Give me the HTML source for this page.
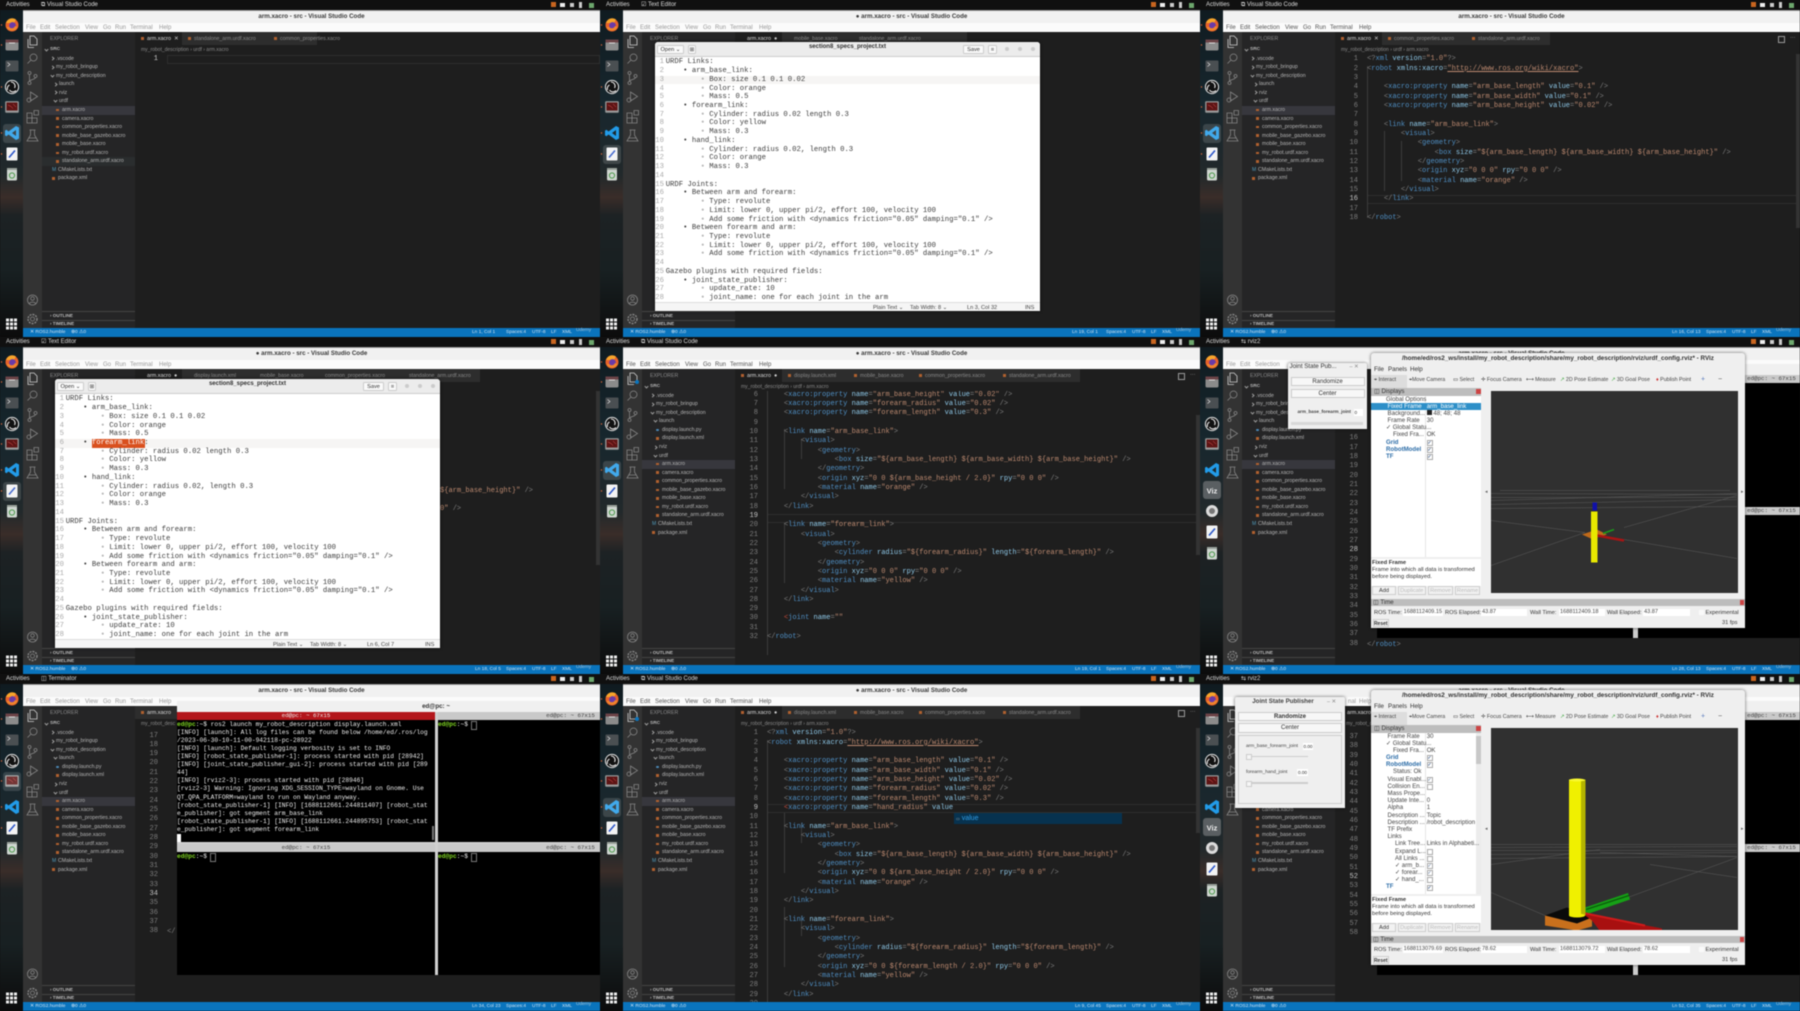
<!DOCTYPE html>
<html><head><meta charset="utf-8"><title>VS Code grid</title>
<style>
html,body{margin:0;padding:0;background:#111;width:1800px;height:1011px;overflow:hidden}
#root{position:absolute;left:0;top:0;width:1800px;height:1011px;filter:blur(.42px)}
.cell{position:absolute;width:600px;height:337px;overflow:hidden;font:5.4px "Liberation Sans",sans-serif;white-space:nowrap;background:#1e1e1e}
.cell div,.cell pre,.cell svg{position:absolute;margin:0}
.x{line-height:0}
.tt{left:0;top:0;width:600px;height:10px;background:#101010;color:#ddd;font-size:6px;z-index:5}
.dk{left:0;top:0;width:23px;height:337px}
.tb{left:23px;top:10px;width:577px;height:13px;background:#f1f1f1;border-top:1px solid #999;box-sizing:border-box}
.mb{left:23px;top:23px;width:577px;height:9px;background:#fbfbfb}
.ab{left:23px;top:32px;width:19px;height:296px;background:#333}
.sd{left:42px;top:32px;width:93px;height:296px;background:#252526}
.tab0{left:135px;top:32px;height:13px;background:#2d2d2d}
.tab1{left:135px;top:32px;width:47px;height:13px;background:#1e1e1e}
.st{left:23px;top:328px;width:577px;height:9px;background:#0a74bd}
.ttl{top:16.5px;left:23px;width:577px;text-align:center;color:#3a3a3a;font-size:6.2px;font-weight:bold}
.m{top:27.5px;font-size:6px;color:#555}
.dim .m{color:#999}
.st .x{top:5px;color:#cfe3f2;font-size:4.8px}
.tx{top:38.5px;color:#8a8a8a;font-size:5.2px}
.tr{left:42px;top:55px;width:93px;color:#b5b5b5;font-size:5.2px}
.tr p{position:relative;margin:0;height:8.57px;line-height:8.57px}
.tr s{position:absolute;top:2.6px;width:2px;height:2px;border-right:.5px solid #999;border-bottom:.5px solid #999;transform:rotate(-45deg)}
.tr s.o{transform:rotate(45deg);top:2px}
.tr q{position:absolute;top:2.8px;width:2.6px;height:2.6px;background:#b0602f;quotes:none}
.tr q:before,.tr q:after{content:""}
.tr .sl{background:#37373d}
.tr .M{background:none;color:#519aba;font-size:5px;top:0;width:auto;height:auto}
.tr .py{background:#4b8ab8;border-radius:50%}
.d0{padding-left:8px}.d0 s{left:3px}
.d1{padding-left:14px}.d1 s{left:9px}
.d2{padding-left:17px}.d2 s{left:12px}
.f2{padding-left:20px}.f2 q{left:14px}
.f1{padding-left:16px}.f1 q{left:10px}
.ed{left:135px;top:54px;width:465px;height:274px;overflow:hidden;background:#1e1e1e}
.ln{left:0;width:23px;text-align:right;font:7.06px/9.33px "Liberation Mono",monospace;color:#7d7d7d;white-space:pre}
.cd{left:32px;font:7.06px/9.33px "Liberation Mono",monospace;color:#7c7c7c;white-space:pre}
.cd i{font-style:normal;color:#4f8fc4}
.cd b{font-weight:normal;color:#8ec8e8}
.cd u{text-decoration:none;color:#bd8a70}
.sb{left:596px;width:4px;background:#333}
.gd{left:32px;width:.6px;background:#3c3c3c}
.g{left:55px;top:42px;width:385px;height:269px;background:#fff;border-radius:3px 3px 0 0;overflow:hidden;box-shadow:0 0 3px rgba(0,0,0,.7)}
.gh{left:0;top:0;width:385px;height:14px;background:#ececec;border-bottom:.5px solid #ccc}
.gb{background:#fafafa;border:.5px solid #ccc;border-radius:1.5px;box-sizing:border-box;text-align:center;color:#333;font-size:5.6px;line-height:8px;height:9px;top:2.5px}
.gt{left:10.7px;top:16.3px;font:7.28px/8.73px "Liberation Mono",monospace;color:#3d3d3d;white-space:pre}
.gn{left:0;top:16.3px;width:9px;text-align:right;font:7.28px/8.73px "Liberation Mono",monospace;color:#aaa;white-space:pre}
.gs{left:0;top:260px;width:385px;height:9px;background:#f5f5f5;border-top:.5px solid #ddd;color:#444;font-size:5.6px}
.gs .x{top:4.5px}
.w{top:5px;width:4px;height:4px;border-radius:50%;background:#d4d4d4}
.R{left:171px;top:15.5px;width:374px;height:275.5px;background:#efefef;color:#333;font-size:6px;border-radius:3px 3px 0 0;box-shadow:0 0 3px rgba(0,0,0,.6)}
.R .y{line-height:0}
.rl{left:0;top:42px;width:110px;height:160px;background:#fff;overflow:hidden;font-size:6.1px}
.rl p{margin:0;height:7.2px;line-height:7.2px;position:relative;color:#444}
.rl em{position:absolute;left:55.7px;font-style:normal}
.rl .k{position:absolute;left:55.5px;top:1.2px;width:4px;height:4px;border:.5px solid #aaa;background:#fff;color:#3a5a8a;font-size:4.5px;line-height:4px;text-align:center}
.rl .bl{color:#2e6ea8;font-weight:bold}
.rb{background:#f2f2f2;border:.5px solid #ccc;box-sizing:border-box;text-align:center;font-size:5.6px;line-height:8px;height:9px;color:#333}
.rb.off{color:#bbb}
.fd{background:#fff;height:7px;line-height:7px;font-size:5.6px;color:#444;padding-left:1px;box-sizing:border-box}
.T{left:177px;top:27px;width:526px;height:274px;background:#000}
.Tb{height:8px;background:#c9c9c9;color:#444;font:5.8px/8px "Liberation Mono",monospace;text-align:center}
.Tp{font:6.24px/8.1px "Liberation Mono",monospace;color:#eee;white-space:pre}
.Tp b{color:#7ed321;font-weight:bold}
.J{background:#efefef;box-shadow:0 0 3px rgba(0,0,0,.6);color:#333;border-radius:2px 2px 0 0}
.Jb{background:#f7f7f7;border:.5px solid #ccc;box-sizing:border-box;text-align:center;font-size:6px;color:#333}
.ic{top:37px;width:2.6px;height:2.6px;background:#b0602f}
</style></head><body>
<svg width="0" height="0" style="position:absolute">
<defs>
<g id="iff"><circle r="6.5" fill="#e8622a"/><path d="M-6 -2A6.5 6.5 0 0 1 4 -5.5L2 -2Z" fill="#f7a52b"/><circle r="3.4" cx=".5" cy=".5" fill="#6a3aa8"/><path d="M-5.5 2A6 6 0 0 0 5.5 2L3 1A3.5 3.5 0 0 1-3 2Z" fill="#f0862c"/></g>
<g id="ifl"><rect x="-6.5" y="-5.5" width="13" height="11" rx="1.5" fill="#8b8b8b"/><path d="M-6.5 -5.5h13v3h-13z" fill="#6b4347"/><rect x="-3" y="-2.5" width="6" height="1" fill="#ddd"/></g>
<g id="itm"><rect x="-6.5" y="-5.5" width="13" height="11" rx="1" fill="#4a4f52"/><path d="M-4.5 -3.5l2.5 2-2.5 2" fill="none" stroke="#ddd" stroke-width=".7"/></g>
<g id="iob"><circle r="6.6" fill="#111" stroke="#e8e8e8" stroke-width="1"/><path d="M-1 -5A4 4 0 0 1 2.5 1M-4.5 3A4 4 0 0 1-2.5-2M4 3.5A4 4 0 0 1-2.5 3" fill="none" stroke="#e8e8e8" stroke-width="1.1"/></g>
<g id="ird"><rect x="-6.8" y="-5.8" width="13.6" height="11.6" rx="1" fill="#999"/><rect x="-5.5" y="-4.5" width="11" height="8" fill="#5d1414"/><path d="M-4 -2l3 1.5 2 2M1 -3l3 3" stroke="#d55" stroke-width=".5" fill="none"/></g>
<g id="ivs"><path fill="#229be8" fill-rule="evenodd" d="M4-7 7-5.5V5.5L4 7-3.5 1.5-5.5 3.3-7 2.4V-2.4L-5.5-3.3-3.5-1.5ZM4-3 0 0 4 3Z"/></g>
<g id="ied"><rect x="-5.5" y="-6.5" width="11" height="13" rx="1" fill="#f3f3f3"/><path d="M-3 3.5 3-3.5" stroke="#2b55c8" stroke-width="1.6"/></g>
<g id="itr"><rect x="-5" y="-6" width="10" height="12.5" rx="1.2" fill="#cfd6d0"/><rect x="-5" y="-6" width="10" height="2" fill="#9aa29c"/><circle cy="1.5" r="2.6" fill="none" stroke="#4f9a4f" stroke-width="1"/></g>
<g id="igr"><rect x="-5.5" y="-5.5" width="3" height="3" fill="#eee"/><rect x="-1.5" y="-5.5" width="3" height="3" fill="#eee"/><rect x="2.5" y="-5.5" width="3" height="3" fill="#eee"/><rect x="-5.5" y="-1.5" width="3" height="3" fill="#eee"/><rect x="-1.5" y="-1.5" width="3" height="3" fill="#eee"/><rect x="2.5" y="-1.5" width="3" height="3" fill="#eee"/><rect x="-5.5" y="2.5" width="3" height="3" fill="#eee"/><rect x="-1.5" y="2.5" width="3" height="3" fill="#eee"/><rect x="2.5" y="2.5" width="3" height="3" fill="#eee"/></g>
<linearGradient id="dg" x1="0" y1="0" x2="0" y2="1"><stop offset="0" stop-color="#0f1a1f"/><stop offset=".3" stop-color="#17272e"/><stop offset=".52" stop-color="#22292b"/><stop offset=".585" stop-color="#3a2d29"/><stop offset=".64" stop-color="#1d2224"/><stop offset=".8" stop-color="#182022"/><stop offset="1" stop-color="#0c0c0c"/></linearGradient>
<symbol id="dock1" viewBox="0 0 23 337"><rect width="23" height="337" fill="url(#dg)"/>
<use href="#iff" x="12" y="25"/><use href="#ifl" x="12" y="45"/><use href="#itm" x="12" y="66"/><use href="#iob" x="12" y="87"/><use href="#ird" x="12" y="107"/><use href="#ivs" x="12" y="133"/><use href="#ied" x="12" y="154"/><use href="#itr" x="12" y="174"/><use href="#igr" x="11.5" y="324"/>
<circle cx="1.5" cy="25" r=".7" fill="#d8653a"/><circle cx="1.5" cy="45" r=".7" fill="#d8653a"/><circle cx="1.5" cy="87" r=".7" fill="#d8653a"/><circle cx="1.5" cy="107" r=".7" fill="#d8653a"/><circle cx="1.5" cy="133" r=".7" fill="#d8653a"/><circle cx="1.5" cy="154" r=".7" fill="#d8653a"/></symbol>
<symbol id="dock2" viewBox="0 0 23 337"><rect width="23" height="337" fill="url(#dg)"/>
<use href="#iff" x="12" y="25"/><use href="#ifl" x="12" y="45"/><use href="#itm" x="12" y="66"/><use href="#iob" x="12" y="87"/><use href="#ird" x="12" y="107"/><use href="#ivs" x="12" y="133"/>
<rect x="3" y="144" width="18" height="18" rx="3" fill="#5a5f62"/><text x="12" y="156.5" font-family="Liberation Sans" font-size="7.5" font-weight="bold" fill="#eee" text-anchor="middle">Viz</text>
<circle cx="12" cy="174" r="6" fill="#dcdcdc"/><circle cx="12" cy="174" r="3" fill="#777"/>
<use href="#ied" x="12" y="195"/><use href="#itr" x="12" y="216"/><use href="#igr" x="11.5" y="324"/></symbol>
<symbol id="act" viewBox="0 0 19 296"><g fill="none" stroke="#858585" stroke-width=".8">
<path d="M7 4h4l3 3v6H7zM5 7v8.5h6" stroke="#d0d0d0"/>
<circle cx="10.5" cy="25.5" r="3.5"/><path d="M8 28l-3.5 3.5"/>
<circle cx="6.5" cy="41" r="1.5"/><circle cx="6.5" cy="51" r="1.5"/><circle cx="12.5" cy="44" r="1.5"/><path d="M6.5 42.5v7M12.5 45.5c0 2-6 2-6 4"/>
<path d="M7.5 60l7 4.5-7 4.500z"/><circle cx="6" cy="68" r="2"/>
<path d="M4 81h5v5h5v5H4zM4 86h5v5M11 78.5h4.5V83H11z"/>
<path d="M7.5 98v5l-3.500 6h11l-3.500-6v-5M6.500 98h6M5.500 106h8"/>
<circle cx="9.5" cy="268" r="5"/><circle cx="9.5" cy="266.5" r="1.8"/><path d="M6 272c1-2.500 6-2.500 7 0"/>
<circle cx="9.5" cy="287" r="2"/><circle cx="9.5" cy="287" r="4.5" stroke-dasharray="2 1" stroke-width="1.4"/></g></symbol>
</defs></svg>
<div id="root">

<!-- CELL 1 -->
<div class="cell dim" style="left:0;top:0">
<div class="tt"><div class="x" style="left:6px;top:5px">Activities</div><div class="x" style="left:41px;top:5px">⧉ Visual Studio Code</div><div style="left:551px;top:2px;width:5px;height:5px;background:#c9651f"></div><div style="left:560px;top:3px;width:5px;height:4px;background:#eee"></div><div style="left:570px;top:3px;width:4px;height:4px;background:#ccc"></div><div style="left:579px;top:2px;width:3px;height:6px;background:#ccc"></div><div style="left:589px;top:3px;width:5px;height:5px;background:#6da86d"></div></div>
<svg class="dk"><use href="#dock1" width="23" height="337"/></svg>
<div style="left:3px;top:124px;width:18px;height:19px;background:rgba(255,255,255,.14);border-radius:3px"></div>
<div class="tb"></div><div class="ttl x">arm.xacro - src - Visual Studio Code</div>
<div class="mb"></div><div class="m x" style="left:26px">File</div><div class="m x" style="left:40px">Edit</div><div class="m x" style="left:55px">Selection</div><div class="m x" style="left:85px">View</div><div class="m x" style="left:103px">Go</div><div class="m x" style="left:115px">Run</div><div class="m x" style="left:130px">Terminal</div><div class="m x" style="left:159px">Help</div>
<div class="ab"></div><svg style="left:23px;top:32px;width:19px;height:296px"><use href="#act" width="19" height="296"/></svg>
<div class="sd"></div><div class="x tx" style="left:50px">EXPLORER</div>
<div class="tr"><p class="d0" style="margin-top:-9px;font-weight:bold;font-size:4.8px"><s class="o"></s>SRC</p>
<p class="d1"><s></s>.vscode</p><p class="d1"><s></s>my_robot_bringup</p><p class="d1"><s class="o"></s>my_robot_description</p><p class="d2"><s></s>launch</p><p class="d2"><s></s>rviz</p><p class="d2"><s class="o"></s>urdf</p>
<p class="f2 sl"><q></q>arm.xacro</p><p class="f2"><q></q>camera.xacro</p><p class="f2"><q></q>common_properties.xacro</p><p class="f2"><q></q>mobile_base_gazebo.xacro</p><p class="f2"><q></q>mobile_base.xacro</p><p class="f2"><q></q>my_robot.urdf.xacro</p><p class="f2" style="background:#2a2d2e"><q></q>standalone_arm.urdf.xacro</p><p class="f1"><q class="M">M</q>CMakeLists.txt</p><p class="f1"><q></q>package.xml</p></div>
<div class="x" style="left:50px;top:316px;color:#bbb;font-weight:bold;font-size:4.6px">› OUTLINE</div><div class="x" style="left:50px;top:324px;color:#bbb;font-weight:bold;font-size:4.6px">› TIMELINE</div><div style="left:42px;top:311px;width:93px;height:.5px;background:#444"></div><div style="left:42px;top:320px;width:93px;height:.5px;background:#444"></div>
<div class="ed"></div>
<div class="tab0" style="width:135px;left:182px"></div><div class="tab1"></div><div style="left:135px;top:45px;width:465px;height:9px;background:#1e1e1e"></div>
<div class="x" style="left:147px;top:38.5px;color:#ddd;font-size:5.4px">arm.xacro</div><div class="x" style="left:174px;top:38.5px;color:#ccc">✕</div><div class="ic" style="left:141px"></div>
<div class="x tx" style="left:194px">standalone_arm.urdf.xacro</div><div class="ic" style="left:188px"></div><div class="x tx" style="left:280px">common_properties.xacro</div><div class="ic" style="left:274px"></div>
<div class="x" style="left:141px;top:49.5px;color:#888;font-size:5px">my_robot_description › urdf › arm.xacro</div>
<div class="ed" style="background:none"><div class="ln" style="top:1.4px;color:#c6c6c6">1</div><div style="left:32px;top:1.4px;width:433px;height:9px;border:.5px solid #2e2e2e;box-sizing:border-box"></div></div>
<div class="st"><div class="x" style="left:7px">✕ ROS2.humble</div><div class="x" style="left:48px">⊗0 ⚠0</div><div class="x" style="left:449px">Ln 1, Col 1</div><div class="x" style="left:483px">Spaces:4</div><div class="x" style="left:509px">UTF-8</div><div class="x" style="left:528px">LF</div><div class="x" style="left:539px">XML</div><div class="x" style="left:553px;top:3px;color:#9fc0d8">Udemy</div></div>
</div>

<!-- CELL 2 -->
<div class="cell dim" style="left:600px;top:0">
<div class="tt"><div class="x" style="left:6px;top:5px">Activities</div><div class="x" style="left:41px;top:5px">☑ Text Editor</div><div style="left:551px;top:2px;width:5px;height:5px;background:#c9651f"></div><div style="left:560px;top:3px;width:5px;height:4px;background:#eee"></div><div style="left:570px;top:3px;width:4px;height:4px;background:#ccc"></div><div style="left:579px;top:2px;width:3px;height:6px;background:#ccc"></div><div style="left:589px;top:3px;width:5px;height:5px;background:#6da86d"></div></div>
<svg class="dk"><use href="#dock1" width="23" height="337"/></svg>
<div style="left:3px;top:145px;width:18px;height:19px;background:rgba(255,255,255,.14);border-radius:3px"></div>
<div class="tb"></div><div class="ttl x">● arm.xacro - src - Visual Studio Code</div>
<div class="mb"></div><div class="m x" style="left:26px">File</div><div class="m x" style="left:40px">Edit</div><div class="m x" style="left:55px">Selection</div><div class="m x" style="left:85px">View</div><div class="m x" style="left:103px">Go</div><div class="m x" style="left:115px">Run</div><div class="m x" style="left:130px">Terminal</div><div class="m x" style="left:159px">Help</div>
<div class="ab"></div><svg style="left:23px;top:32px;width:19px;height:296px"><use href="#act" width="19" height="296"/></svg>
<div class="sd"></div><div class="x tx" style="left:50px">EXPLORER</div>
<div class="x" style="left:50px;top:316px;color:#bbb;font-weight:bold;font-size:4.6px">› OUTLINE</div><div class="x" style="left:50px;top:324px;color:#bbb;font-weight:bold;font-size:4.6px">› TIMELINE</div><div style="left:42px;top:311px;width:93px;height:.5px;background:#444"></div><div style="left:42px;top:320px;width:93px;height:.5px;background:#444"></div>
<div class="tab0" style="width:185px;left:182px"></div><div class="tab1"></div>
<div class="x" style="left:147px;top:38.5px;color:#ddd;font-size:5.4px">arm.xacro</div><div class="x" style="left:174px;top:38.5px;color:#ccc">●</div>
<div class="x tx" style="left:194px">mobile_base.xacro</div><div class="x tx" style="left:259px">standalone_arm.urdf.xacro</div>
<div class="g"><div class="gh"></div>
<div class="gb" style="left:2px;width:27px;text-align:center">Open ⌄</div><div class="gb" style="left:33px;width:8px">⊞</div>
<div class="x" style="left:0;width:385px;text-align:center;top:5px;font-weight:bold;color:#333;font-size:6px">section8_specs_project.txt</div>
<div class="gb" style="left:308px;width:21px">Save</div><div class="gb" style="left:333px;width:9px">≡</div>
<div class="w" style="left:350px;background:#ccc"></div><div class="w" style="left:363px;background:#ccc"></div><div class="w" style="left:376px;background:#ccc"></div>
<div style="left:0;top:33.8px;width:385px;height:8.7px;background:#f6f5f4"></div>
<pre class="gn">1
2
3
4
5
6
7
8
9
10
11
12
13
14
15
16
17
18
19
20
21
22
23
24
25
26
27
28</pre>
<pre class="gt">URDF Links:
    • arm_base_link:
        ◦ Box: size 0.1 0.1 0.02
        ◦ Color: orange
        ◦ Mass: 0.5
    • forearm_link:
        ◦ Cylinder: radius 0.02 length 0.3
        ◦ Color: yellow
        ◦ Mass: 0.3
    • hand_link:
        ◦ Cylinder: radius 0.02, length 0.3
        ◦ Color: orange
        ◦ Mass: 0.3

URDF Joints:
    • Between arm and forearm:
        ◦ Type: revolute
        ◦ Limit: lower 0, upper pi/2, effort 100, velocity 100
        ◦ Add some friction with &lt;dynamics friction="0.05" damping="0.1" /&gt;
    • Between forearm and arm:
        ◦ Type: revolute
        ◦ Limit: lower 0, upper pi/2, effort 100, velocity 100
        ◦ Add some friction with &lt;dynamics friction="0.05" damping="0.1" /&gt;

Gazebo plugins with required fields:
    • joint_state_publisher:
        ◦ update_rate: 10
        ◦ joint_name: one for each joint in the arm</pre>
<div class="gs"><div class="x" style="left:218px">Plain Text ⌄</div><div class="x" style="left:255px">Tab Width: 8 ⌄</div><div class="x" style="left:312px">Ln 3, Col 32</div><div class="x" style="left:370px">INS</div></div>
</div>
<div class="st"><div class="x" style="left:7px">✕ ROS2.humble</div><div class="x" style="left:48px">⊗0 ⚠0</div><div class="x" style="left:449px">Ln 19, Col 1</div><div class="x" style="left:483px">Spaces:4</div><div class="x" style="left:509px">UTF-8</div><div class="x" style="left:528px">LF</div><div class="x" style="left:539px">XML</div><div class="x" style="left:553px;top:3px;color:#9fc0d8">Udemy</div></div>
</div>

<!-- CELL 3 -->
<div class="cell" style="left:1200px;top:0">
<div class="tt"><div class="x" style="left:6px;top:5px">Activities</div><div class="x" style="left:41px;top:5px">⧉ Visual Studio Code</div><div style="left:551px;top:2px;width:5px;height:5px;background:#c9651f"></div><div style="left:560px;top:3px;width:5px;height:4px;background:#eee"></div><div style="left:570px;top:3px;width:4px;height:4px;background:#ccc"></div><div style="left:579px;top:2px;width:3px;height:6px;background:#ccc"></div><div style="left:589px;top:3px;width:5px;height:5px;background:#6da86d"></div></div>
<svg class="dk"><use href="#dock1" width="23" height="337"/></svg>
<div style="left:3px;top:124px;width:18px;height:19px;background:rgba(255,255,255,.14);border-radius:3px"></div>
<div class="tb"></div><div class="ttl x">arm.xacro - src - Visual Studio Code</div>
<div class="mb"></div><div class="m x" style="left:26px">File</div><div class="m x" style="left:40px">Edit</div><div class="m x" style="left:55px">Selection</div><div class="m x" style="left:85px">View</div><div class="m x" style="left:103px">Go</div><div class="m x" style="left:115px">Run</div><div class="m x" style="left:130px">Terminal</div><div class="m x" style="left:159px">Help</div>
<div class="ab"></div><svg style="left:23px;top:32px;width:19px;height:296px"><use href="#act" width="19" height="296"/></svg>
<div class="sd"></div><div class="x tx" style="left:50px">EXPLORER</div>
<div class="tr"><p class="d0" style="margin-top:-9px;font-weight:bold;font-size:4.8px"><s class="o"></s>SRC</p>
<p class="d1"><s></s>.vscode</p><p class="d1"><s></s>my_robot_bringup</p><p class="d1"><s class="o"></s>my_robot_description</p><p class="d2"><s></s>launch</p><p class="d2"><s></s>rviz</p><p class="d2"><s class="o"></s>urdf</p>
<p class="f2 sl"><q></q>arm.xacro</p><p class="f2"><q></q>camera.xacro</p><p class="f2"><q></q>common_properties.xacro</p><p class="f2"><q></q>mobile_base_gazebo.xacro</p><p class="f2"><q></q>mobile_base.xacro</p><p class="f2"><q></q>my_robot.urdf.xacro</p><p class="f2"><q></q>standalone_arm.urdf.xacro</p><p class="f1"><q class="M">M</q>CMakeLists.txt</p><p class="f1"><q></q>package.xml</p></div>
<div class="x" style="left:50px;top:316px;color:#bbb;font-weight:bold;font-size:4.6px">› OUTLINE</div><div class="x" style="left:50px;top:324px;color:#bbb;font-weight:bold;font-size:4.6px">› TIMELINE</div><div style="left:42px;top:311px;width:93px;height:.5px;background:#444"></div><div style="left:42px;top:320px;width:93px;height:.5px;background:#444"></div>
<div class="ed"><div style="left:32px;top:141px;width:433px;height:9.3px;border:.5px solid #2e2e2e;box-sizing:border-box"></div><div class="gd" style="top:12px;height:152px"></div><div class="gd" style="left:49px;top:77px;height:60px"></div><div class="gd" style="left:66px;top:87px;height:40px"></div>
<pre class="ln" style="top:1.4px">1
2
3
4
5
6
7
8
9
10
11
12
13
14
15
<span style="color:#c6c6c6">16</span>
17
18</pre>
<pre class="cd" style="top:1.4px">&lt;?<i>xml</i> <b>version</b>=<u>"1.0"</u>?&gt;
&lt;<i>robot</i> <b>xmlns:xacro</b>=<u style="text-decoration:underline">"http://www.ros.org/wiki/xacro"</u>&gt;

    &lt;<i>xacro:property</i> <b>name</b>=<u>"arm_base_length"</u> <b>value</b>=<u>"0.1"</u> /&gt;
    &lt;<i>xacro:property</i> <b>name</b>=<u>"arm_base_width"</u> <b>value</b>=<u>"0.1"</u> /&gt;
    &lt;<i>xacro:property</i> <b>name</b>=<u>"arm_base_height"</u> <b>value</b>=<u>"0.02"</u> /&gt;

    &lt;<i>link</i> <b>name</b>=<u>"arm_base_link"</u>&gt;
        &lt;<i>visual</i>&gt;
            &lt;<i>geometry</i>&gt;
                &lt;<i>box</i> <b>size</b>=<u>"${arm_base_length} ${arm_base_width} ${arm_base_height}"</u> /&gt;
            &lt;/<i>geometry</i>&gt;
            &lt;<i>origin</i> <b>xyz</b>=<u>"0 0 0"</u> <b>rpy</b>=<u>"0 0 0"</u> /&gt;
            &lt;<i>material</i> <b>name</b>=<u>"orange"</u> /&gt;
        &lt;/<i>visual</i>&gt;
    &lt;/<i>link</i>&gt;

&lt;/<i>robot</i>&gt;</pre></div>
<div class="tab0" style="width:168px;left:182px"></div><div class="tab1"></div><div style="left:135px;top:45px;width:465px;height:9px;background:#1e1e1e"></div>
<div class="x" style="left:147px;top:38.5px;color:#ddd;font-size:5.4px">arm.xacro</div><div class="x" style="left:174px;top:38.5px;color:#ccc">✕</div><div class="ic" style="left:141px"></div>
<div class="x tx" style="left:194px">common_properties.xacro</div><div class="ic" style="left:188px"></div><div class="x tx" style="left:278px">standalone_arm.urdf.xacro</div><div class="ic" style="left:272px"></div>
<div class="x" style="left:141px;top:49.5px;color:#888;font-size:5px">my_robot_description › urdf › arm.xacro</div>
<div class="sb" style="top:54px;height:174px"></div><div style="left:578px;top:36px;width:5px;height:5px;border:.5px solid #999"></div><div class="x" style="left:590px;top:38px;color:#aaa">···</div>
<div class="st"><div class="x" style="left:7px">✕ ROS2.humble</div><div class="x" style="left:48px">⊗0 ⚠0</div><div class="x" style="left:449px">Ln 16, Col 13</div><div class="x" style="left:483px">Spaces:4</div><div class="x" style="left:509px">UTF-8</div><div class="x" style="left:528px">LF</div><div class="x" style="left:539px">XML</div><div class="x" style="left:553px;top:3px;color:#9fc0d8">Udemy</div></div>
</div>

<!-- CELL 4 -->
<div class="cell dim" style="left:0;top:337px">
<div class="tt"><div class="x" style="left:6px;top:5px">Activities</div><div class="x" style="left:41px;top:5px">☑ Text Editor</div><div style="left:551px;top:2px;width:5px;height:5px;background:#c9651f"></div><div style="left:560px;top:3px;width:5px;height:4px;background:#eee"></div><div style="left:570px;top:3px;width:4px;height:4px;background:#ccc"></div><div style="left:579px;top:2px;width:3px;height:6px;background:#ccc"></div><div style="left:589px;top:3px;width:5px;height:5px;background:#6da86d"></div></div>
<svg class="dk"><use href="#dock1" width="23" height="337"/></svg>
<div style="left:3px;top:145px;width:18px;height:19px;background:rgba(255,255,255,.14);border-radius:3px"></div>
<div class="tb"></div><div class="ttl x">● arm.xacro - src - Visual Studio Code</div>
<div class="mb"></div><div class="m x" style="left:26px">File</div><div class="m x" style="left:40px">Edit</div><div class="m x" style="left:55px">Selection</div><div class="m x" style="left:85px">View</div><div class="m x" style="left:103px">Go</div><div class="m x" style="left:115px">Run</div><div class="m x" style="left:130px">Terminal</div><div class="m x" style="left:159px">Help</div>
<div class="ab"></div><svg style="left:23px;top:32px;width:19px;height:296px"><use href="#act" width="19" height="296"/></svg>
<div class="sd"></div><div class="x tx" style="left:50px">EXPLORER</div>
<div class="x" style="left:50px;top:316px;color:#bbb;font-weight:bold;font-size:4.6px">› OUTLINE</div><div class="x" style="left:50px;top:324px;color:#bbb;font-weight:bold;font-size:4.6px">› TIMELINE</div><div style="left:42px;top:311px;width:93px;height:.5px;background:#444"></div><div style="left:42px;top:320px;width:93px;height:.5px;background:#444"></div>
<div class="tab0" style="width:298px;left:182px"></div><div class="tab1"></div>
<div class="x" style="left:147px;top:38.5px;color:#ddd;font-size:5.4px">arm.xacro</div><div class="x" style="left:174px;top:38.5px;color:#ccc">●</div>
<div class="x tx" style="left:194px">display.launch.xml</div><div class="x tx" style="left:260px">mobile_base.xacro</div><div class="x tx" style="left:325px">common_properties.xacro</div><div class="x tx" style="left:409px">standalone_arm.urdf.xacro</div>
<div class="x" style="left:440px;top:153.5px;font:7.06px/0 'Liberation Mono',monospace;color:#bd8a70">${arm_base_height}" <span style="color:#7c7c7c">/&gt;</span></div>
<div class="x" style="left:440px;top:172px;font:7.06px/0 'Liberation Mono',monospace;color:#bd8a70">0" <span style="color:#7c7c7c">/&gt;</span></div>
<div class="sb" style="top:54px;height:174px"></div>
<div class="g"><div class="gh"></div>
<div class="gb" style="left:2px;width:27px;text-align:center">Open ⌄</div><div class="gb" style="left:33px;width:8px">⊞</div>
<div class="x" style="left:0;width:385px;text-align:center;top:5px;font-weight:bold;color:#333;font-size:6px">section8_specs_project.txt</div>
<div class="gb" style="left:308px;width:21px">Save</div><div class="gb" style="left:333px;width:9px">≡</div>
<div class="w" style="left:350px;background:#ccc"></div><div class="w" style="left:363px;background:#ccc"></div><div class="w" style="left:376px;background:#ccc"></div>
<div style="left:0;top:60px;width:385px;height:8.7px;background:#f6f5f4"></div><div style="left:37px;top:60px;width:53px;height:8.7px;background:#d9501e"></div>
<pre class="gn">1
2
3
4
5
6
7
8
9
10
11
12
13
14
15
16
17
18
19
20
21
22
23
24
25
26
27
28</pre>
<pre class="gt">URDF Links:
    • arm_base_link:
        ◦ Box: size 0.1 0.1 0.02
        ◦ Color: orange
        ◦ Mass: 0.5
    • <span style="color:#fff">forearm_link</span>:
        ◦ Cylinder: radius 0.02 length 0.3
        ◦ Color: yellow
        ◦ Mass: 0.3
    • hand_link:
        ◦ Cylinder: radius 0.02, length 0.3
        ◦ Color: orange
        ◦ Mass: 0.3

URDF Joints:
    • Between arm and forearm:
        ◦ Type: revolute
        ◦ Limit: lower 0, upper pi/2, effort 100, velocity 100
        ◦ Add some friction with &lt;dynamics friction="0.05" damping="0.1" /&gt;
    • Between forearm and arm:
        ◦ Type: revolute
        ◦ Limit: lower 0, upper pi/2, effort 100, velocity 100
        ◦ Add some friction with &lt;dynamics friction="0.05" damping="0.1" /&gt;

Gazebo plugins with required fields:
    • joint_state_publisher:
        ◦ update_rate: 10
        ◦ joint_name: one for each joint in the arm</pre>
<div class="gs"><div class="x" style="left:218px">Plain Text ⌄</div><div class="x" style="left:255px">Tab Width: 8 ⌄</div><div class="x" style="left:312px">Ln 6, Col 7</div><div class="x" style="left:370px">INS</div></div>
</div>
<div class="st"><div class="x" style="left:7px">✕ ROS2.humble</div><div class="x" style="left:48px">⊗0 ⚠0</div><div class="x" style="left:452px">Ln 18, Col 5</div><div class="x" style="left:483px">Spaces:4</div><div class="x" style="left:509px">UTF-8</div><div class="x" style="left:528px">LF</div><div class="x" style="left:539px">XML</div><div class="x" style="left:553px;top:3px;color:#9fc0d8">Udemy</div></div>
</div>

<!-- CELL 5 -->
<div class="cell" style="left:600px;top:337px">
<div class="tt"><div class="x" style="left:6px;top:5px">Activities</div><div class="x" style="left:41px;top:5px">⧉ Visual Studio Code</div><div style="left:551px;top:2px;width:5px;height:5px;background:#c9651f"></div><div style="left:560px;top:3px;width:5px;height:4px;background:#eee"></div><div style="left:570px;top:3px;width:4px;height:4px;background:#ccc"></div><div style="left:579px;top:2px;width:3px;height:6px;background:#ccc"></div><div style="left:589px;top:3px;width:5px;height:5px;background:#6da86d"></div></div>
<svg class="dk"><use href="#dock1" width="23" height="337"/></svg>
<div style="left:3px;top:124px;width:18px;height:19px;background:rgba(255,255,255,.14);border-radius:3px"></div>
<div class="tb"></div><div class="ttl x">● arm.xacro - src - Visual Studio Code</div>
<div class="mb"></div><div class="m x" style="left:26px">File</div><div class="m x" style="left:40px">Edit</div><div class="m x" style="left:55px">Selection</div><div class="m x" style="left:85px">View</div><div class="m x" style="left:103px">Go</div><div class="m x" style="left:115px">Run</div><div class="m x" style="left:130px">Terminal</div><div class="m x" style="left:159px">Help</div>
<div class="ab"></div><svg style="left:23px;top:32px;width:19px;height:296px"><use href="#act" width="19" height="296"/></svg><div style="left:34.5px;top:42.5px;width:4px;height:4px;border-radius:50%;background:#0a74bd"></div>
<div class="sd"></div><div class="x tx" style="left:50px">EXPLORER</div>
<div class="tr"><p class="d0" style="margin-top:-9px;font-weight:bold;font-size:4.8px"><s class="o"></s>SRC</p>
<p class="d1"><s></s>.vscode</p><p class="d1"><s></s>my_robot_bringup</p><p class="d1"><s class="o"></s>my_robot_description</p><p class="d2"><s class="o"></s>launch</p><p class="f2"><q class="py"></q>display.launch.py</p><p class="f2"><q></q>display.launch.xml</p><p class="d2"><s></s>rviz</p><p class="d2"><s class="o"></s>urdf</p>
<p class="f2 sl"><q></q>arm.xacro</p><p class="f2"><q></q>camera.xacro</p><p class="f2"><q></q>common_properties.xacro</p><p class="f2"><q></q>mobile_base_gazebo.xacro</p><p class="f2"><q></q>mobile_base.xacro</p><p class="f2"><q></q>my_robot.urdf.xacro</p><p class="f2"><q></q>standalone_arm.urdf.xacro</p><p class="f1"><q class="M">M</q>CMakeLists.txt</p><p class="f1"><q></q>package.xml</p></div>
<div class="x" style="left:50px;top:316px;color:#bbb;font-weight:bold;font-size:4.6px">› OUTLINE</div><div class="x" style="left:50px;top:324px;color:#bbb;font-weight:bold;font-size:4.6px">› TIMELINE</div><div style="left:42px;top:311px;width:93px;height:.5px;background:#444"></div><div style="left:42px;top:320px;width:93px;height:.5px;background:#444"></div>
<div class="ed"><div style="left:32px;top:123px;width:433px;height:9.3px;border:.5px solid #2e2e2e;box-sizing:border-box"></div><div class="gd" style="top:0;height:264px"></div><div class="gd" style="left:49px;top:38px;height:60px"></div><div class="gd" style="left:49px;top:132px;height:60px"></div><div class="gd" style="left:66px;top:48px;height:20px"></div>
<pre class="ln" style="top:-.4px">6
7
8
9
10
11
12
13
14
15
16
17
18
<span style="color:#c6c6c6">19</span>
20
21
22
23
24
25
26
27
28
29
30
31
32</pre>
<pre class="cd" style="top:-.4px">    &lt;<i>xacro:property</i> <b>name</b>=<u>"arm_base_height"</u> <b>value</b>=<u>"0.02"</u> /&gt;
    &lt;<i>xacro:property</i> <b>name</b>=<u>"forearm_radius"</u> <b>value</b>=<u>"0.02"</u> /&gt;
    &lt;<i>xacro:property</i> <b>name</b>=<u>"forearm_length"</u> <b>value</b>=<u>"0.3"</u> /&gt;

    &lt;<i>link</i> <b>name</b>=<u>"arm_base_link"</u>&gt;
        &lt;<i>visual</i>&gt;
            &lt;<i>geometry</i>&gt;
                &lt;<i>box</i> <b>size</b>=<u>"${arm_base_length} ${arm_base_width} ${arm_base_height}"</u> /&gt;
            &lt;/<i>geometry</i>&gt;
            &lt;<i>origin</i> <b>xyz</b>=<u>"0 0 ${arm_base_height / 2.0}"</u> <b>rpy</b>=<u>"0 0 0"</u> /&gt;
            &lt;<i>material</i> <b>name</b>=<u>"orange"</u> /&gt;
        &lt;/<i>visual</i>&gt;
    &lt;/<i>link</i>&gt;

    &lt;<i>link</i> <b>name</b>=<u>"forearm_link"</u>&gt;
        &lt;<i>visual</i>&gt;
            &lt;<i>geometry</i>&gt;
                &lt;<i>cylinder</i> <b>radius</b>=<u>"${forearm_radius}"</u> <b>length</b>=<u>"${forearm_length}"</u> /&gt;
            &lt;/<i>geometry</i>&gt;
            &lt;<i>origin</i> <b>xyz</b>=<u>"0 0 0"</u> <b>rpy</b>=<u>"0 0 0"</u> /&gt;
            &lt;<i>material</i> <b>name</b>=<u>"yellow"</u> /&gt;
        &lt;/<i>visual</i>&gt;
    &lt;/<i>link</i>&gt;

    <span style="color:#c04a3a">&lt;</span><i>joint</i> <b>name</b>=<u>""</u>

&lt;/<i>robot</i>&gt;</pre></div>
<div class="tab0" style="width:298px;left:182px"></div><div class="tab1"></div><div style="left:135px;top:45px;width:465px;height:9px;background:#1e1e1e"></div>
<div class="x" style="left:147px;top:38.5px;color:#ddd;font-size:5.4px">arm.xacro</div><div class="x" style="left:174px;top:38.5px;color:#ccc">●</div><div class="ic" style="left:141px"></div>
<div class="x tx" style="left:194px">display.launch.xml</div><div class="ic" style="left:188px"></div><div class="x tx" style="left:260px">mobile_base.xacro</div><div class="ic" style="left:254px"></div><div class="x tx" style="left:325px">common_properties.xacro</div><div class="ic" style="left:319px"></div><div class="x tx" style="left:409px">standalone_arm.urdf.xacro</div><div class="ic" style="left:403px"></div>
<div class="x" style="left:141px;top:49.5px;color:#888;font-size:5px">my_robot_description › urdf › arm.xacro</div>
<div class="sb" style="top:78px;height:140px"></div><div style="left:578px;top:36px;width:5px;height:5px;border:.5px solid #999"></div><div class="x" style="left:590px;top:38px;color:#aaa">···</div>
<div class="st"><div class="x" style="left:7px">✕ ROS2.humble</div><div class="x" style="left:48px">⊗0 ⚠0</div><div class="x" style="left:452px">Ln 19, Col 1</div><div class="x" style="left:483px">Spaces:4</div><div class="x" style="left:509px">UTF-8</div><div class="x" style="left:528px">LF</div><div class="x" style="left:539px">XML</div><div class="x" style="left:553px;top:3px;color:#9fc0d8">Udemy</div></div>
</div>

<!-- CELL 6 -->
<div class="cell dim" style="left:1200px;top:337px">
<div class="tt"><div class="x" style="left:6px;top:5px">Activities</div><div class="x" style="left:41px;top:5px">⇆ rviz2</div><div style="left:551px;top:2px;width:5px;height:5px;background:#c9651f"></div><div style="left:560px;top:3px;width:5px;height:4px;background:#eee"></div><div style="left:570px;top:3px;width:4px;height:4px;background:#ccc"></div><div style="left:579px;top:2px;width:3px;height:6px;background:#ccc"></div><div style="left:589px;top:3px;width:5px;height:5px;background:#6da86d"></div></div>
<svg class="dk"><use href="#dock2" width="23" height="337"/></svg>
<div class="tb"></div><div class="ttl x">arm.xacro - src - Visual Studio Code</div>
<div class="mb"></div><div class="m x" style="left:26px">File</div><div class="m x" style="left:40px">Edit</div><div class="m x" style="left:55px">Selection</div>
<div class="ab"></div><svg style="left:23px;top:32px;width:19px;height:296px"><use href="#act" width="19" height="296"/></svg>
<div class="sd"></div><div class="x tx" style="left:50px">EXPLORER</div>
<div class="tr"><p class="d0" style="margin-top:-9px;font-weight:bold;font-size:4.8px"><s class="o"></s>SRC</p>
<p class="d1"><s></s>.vscode</p><p class="d1"><s></s>my_robot_bringup</p><p class="d1"><s class="o"></s>my_robot_description</p><p class="d2"><s class="o"></s>launch</p><p class="f2"><q class="py"></q>display.launch.py</p><p class="f2"><q></q>display.launch.xml</p><p class="d2"><s></s>rviz</p><p class="d2"><s class="o"></s>urdf</p>
<p class="f2 sl"><q></q>arm.xacro</p><p class="f2"><q></q>camera.xacro</p><p class="f2"><q></q>common_properties.xacro</p><p class="f2"><q></q>mobile_base_gazebo.xacro</p><p class="f2"><q></q>mobile_base.xacro</p><p class="f2"><q></q>my_robot.urdf.xacro</p><p class="f2"><q></q>standalone_arm.urdf.xacro</p><p class="f1"><q class="M">M</q>CMakeLists.txt</p><p class="f1"><q></q>package.xml</p></div>
<div class="x" style="left:50px;top:316px;color:#bbb;font-weight:bold;font-size:4.6px">› OUTLINE</div><div class="x" style="left:50px;top:324px;color:#bbb;font-weight:bold;font-size:4.6px">› TIMELINE</div><div style="left:42px;top:311px;width:93px;height:.5px;background:#444"></div><div style="left:42px;top:320px;width:93px;height:.5px;background:#444"></div>
<pre class="ln" style="left:135px;top:97.3px">16
17
18
19
20
21
22
23
24
25
26
27
<span style="color:#c6c6c6">28</span>
29
30
31
32
33
34
35
36
37
38</pre>
<pre class="cd" style="left:167px;top:303.6px">&lt;/<i>robot</i>&gt;</pre>
<div class="T"><div class="Tb" style="left:0;top:11px;width:262px">ed@pc: ~ 67x15</div><div class="Tb" style="left:263px;top:11px;width:263px">ed@pc: ~ 67x15</div><div class="Tb" style="left:263px;top:143px;width:263px">ed@pc: ~ 67x15</div><div style="left:0;top:0;width:526px;height:11px;background:#f0f0f0"></div><div style="left:256px;top:264px;width:5px;height:10px;background:#ccc"></div></div>
<div class="J" style="left:87.5px;top:25.7px;width:79.5px;height:66.3px"><div class="x" style="left:2px;top:4.5px;font-size:6.2px">Joint State Pub...</div><div class="x" style="left:62px;top:4.5px;color:#888">– ✕</div>
<div class="Jb" style="left:3px;top:14px;width:74px;height:9.5px;line-height:9px">Randomize</div><div class="Jb" style="left:3px;top:26px;width:74px;height:9px;line-height:8.5px">Center</div>
<div class="x" style="left:10px;top:49.5px;font-size:4.6px;font-weight:bold;color:#444">arm_base_forearm_joint</div><div style="left:66px;top:46px;width:9px;height:7px;background:#fff;font-size:4.6px;line-height:7px;padding-left:1px;box-sizing:border-box">0</div>
<div style="left:3px;top:59px;width:72px;height:3px;background:#d8d8d8"></div></div>
<div class="R">
<div class="y" style="left:0;width:374px;text-align:center;top:6.5px;font-weight:bold;font-size:6.3px;color:#333">/home/ed/ros2_ws/install/my_robot_description/share/my_robot_description/rviz/urdf_config.rviz* - RViz</div>
<div class="y" style="left:3px;top:17px;font-size:6.2px">File</div><div class="y" style="left:17px;top:17px;font-size:6.2px">Panels</div><div class="y" style="left:39px;top:17px;font-size:6.2px">Help</div>
<div style="left:0;top:22.5px;width:36px;height:13px;background:#ddd"></div>
<div class="y" style="left:3px;top:27.5px;font-size:5.3px;color:#444">⌖ Interact</div><div class="y" style="left:38px;top:27.5px;font-size:5.3px;color:#444">⌖Move Camera</div><div class="y" style="left:82px;top:27.5px;font-size:5.3px;color:#444">▭ Select</div><div class="y" style="left:110px;top:27.5px;font-size:5.3px;color:#444">✛ Focus Camera</div><div class="y" style="left:155px;top:27.5px;font-size:5.3px;color:#444">⟷ Measure</div><div class="y" style="left:189px;top:27.5px;font-size:5.3px;color:#444"><span style="color:#4a4">↗</span> 2D Pose Estimate</div><div class="y" style="left:240px;top:27.5px;font-size:5.3px;color:#444"><span style="color:#4a4">↗</span> 3D Goal Pose</div><div class="y" style="left:285px;top:27.5px;font-size:5.3px;color:#444"><span style="color:#c33">♦</span> Publish Point</div><div class="y" style="left:330px;top:27.5px;font-size:7px;color:#5577bb">+</div><div class="y" style="left:347px;top:27.5px;font-size:7px;color:#555">−</div>
<div style="left:0;top:35px;width:110px;height:8px;background:#bdbdbd"></div><div class="y" style="left:3px;top:39px;font-size:6.1px">◫ Displays</div><div style="left:104.5px;top:36.5px;width:5px;height:5px;background:#c44"></div>
<div class="rl" style="top:43px;height:161px"><div style="left:54px;top:0;width:.5px;height:161px;background:#e5e5e5"></div>
<p style="padding-left:15px">Global Options</p>
<p style="padding-left:16.5px;background:#2d8fc8;color:#fff">Fixed Frame<em style="color:#fff">arm_base_link</em></p>
<p style="padding-left:16.5px">Background...<em><span style="display:inline-block;width:5px;height:5px;background:#222"></span> 48; 48; 48</em></p>
<p style="padding-left:16.5px">Frame Rate<em>30</em></p>
<p style="padding-left:15px">✓ Global Statu...</p>
<p style="padding-left:22px">Fixed Fra...<em>OK</em></p>
<p style="padding-left:15px" class="bl">Grid<span class="k">✓</span></p>
<p style="padding-left:15px" class="bl">RobotModel<span class="k">✓</span></p>
<p style="padding-left:15px" class="bl">TF<span class="k">✓</span></p></div>
<div style="left:0;top:206px;width:110px;height:27px;background:#fff;font-size:5.8px;line-height:7px;color:#333;padding:1px;box-sizing:border-box;white-space:normal"><span style="font-weight:bold">Fixed Frame</span><br>Frame into which all data is transformed before being displayed.</div>
<div class="rb" style="left:1px;top:233.5px;width:24px;line-height:9px">Add</div><div class="rb off" style="left:27px;top:233.5px;width:27.5px">Duplicate</div><div class="rb off" style="left:57px;top:233.5px;width:25px">Remove</div><div class="rb off" style="left:84px;top:233.5px;width:25px">Rename</div>
<div style="left:120px;top:38px;width:246.5px;height:202.5px;background:#303030"></div>
<div class="y" style="left:114px;top:139px;color:#666;font-size:5px">◂</div><div class="y" style="left:370px;top:139px;color:#666;font-size:5px">▸</div>
<div style="left:0;top:246px;width:374px;height:7.5px;background:#bdbdbd"></div><div class="y" style="left:2px;top:250px;font-size:6.1px">◫ Time</div><div style="left:369px;top:247px;width:4px;height:5px;background:#c44"></div>
<div class="y" style="left:3px;top:260px;font-size:5.7px">ROS Time:</div><div class="fd" style="left:31.6px;top:256px;width:40.4px">1688112409.15</div><div class="y" style="left:74px;top:260px;font-size:5.7px">ROS Elapsed:</div><div class="fd" style="left:110px;top:256px;width:46px">43.87</div><div class="y" style="left:159px;top:260px;font-size:5.7px">Wall Time:</div><div class="fd" style="left:188px;top:256px;width:46px">1688112409.18</div><div class="y" style="left:236px;top:260px;font-size:5.7px">Wall Elapsed:</div><div class="fd" style="left:272px;top:256px;width:47px">43.87</div><div style="left:328px;top:257.5px;width:5px;height:5px;background:#fafafa"></div><div class="y" style="left:334.5px;top:260px;font-size:5.7px">Experimental</div>
<div class="rb" style="left:1.5px;top:266.5px;width:16.5px;height:8px;font-weight:bold;font-size:5px;line-height:8px">Reset</div><div class="y" style="left:351px;top:270.5px;font-size:5.7px">31 fps</div>
</div>
<svg style="left:291px;top:53.5px;width:246.5px;height:202.5px" viewBox="291 53.5 246.5 202.5"><g stroke="#5c5c5c" stroke-width=".5" fill="none"><path d="M291 156 537 157M291 160 537 160M291 163 537 156M291 167 537 162M291 171 537 169M291 183 385 195M291 228 385 195M424 202 537 221M424 190 537 158M300 153 530 153"/></g>
<rect x="391" y="174" width="6.5" height="51" fill="#e8e800"/><rect x="392.5" y="165" width="4.5" height="8" fill="#1010a8"/><path d="M382 197 397 192 407 197 392 201.5Z" fill="#c06a1a"/><path d="M397 198 424 203" stroke="#a81414" stroke-width="2.5"/><path d="M403 196 414 192" stroke="#1a9a1a" stroke-width="1.5"/><rect x="391" y="180" width="6.5" height="45" fill="#e8e800"/></svg>
<div class="st"><div class="x" style="left:7px">✕ ROS2.humble</div><div class="x" style="left:48px">⊗0 ⚠0</div><div class="x" style="left:449px">Ln 28, Col 13</div><div class="x" style="left:483px">Spaces:4</div><div class="x" style="left:509px">UTF-8</div><div class="x" style="left:528px">LF</div><div class="x" style="left:539px">XML</div><div class="x" style="left:553px;top:3px;color:#9fc0d8">Udemy</div></div>
</div>

<!-- CELL 7 -->
<div class="cell dim" style="left:0;top:674px">
<div class="tt"><div class="x" style="left:6px;top:5px">Activities</div><div class="x" style="left:41px;top:5px">◫ Terminator</div><div style="left:551px;top:2px;width:5px;height:5px;background:#c9651f"></div><div style="left:560px;top:3px;width:5px;height:4px;background:#eee"></div><div style="left:570px;top:3px;width:4px;height:4px;background:#ccc"></div><div style="left:579px;top:2px;width:3px;height:6px;background:#ccc"></div><div style="left:589px;top:3px;width:5px;height:5px;background:#6da86d"></div></div>
<svg class="dk"><use href="#dock1" width="23" height="337"/></svg>
<div style="left:3px;top:98px;width:18px;height:19px;background:rgba(255,255,255,.14);border-radius:3px"></div>
<div class="tb"></div><div class="ttl x">arm.xacro - src - Visual Studio Code</div>
<div class="mb"></div><div class="m x" style="left:26px">File</div><div class="m x" style="left:40px">Edit</div><div class="m x" style="left:55px">Selection</div><div class="m x" style="left:85px">View</div><div class="m x" style="left:103px">Go</div><div class="m x" style="left:115px">Run</div><div class="m x" style="left:130px">Terminal</div><div class="m x" style="left:159px">Help</div>
<div class="ab"></div><svg style="left:23px;top:32px;width:19px;height:296px"><use href="#act" width="19" height="296"/></svg>
<div class="sd"></div><div class="x tx" style="left:50px">EXPLORER</div>
<div class="tr"><p class="d0" style="margin-top:-9px;font-weight:bold;font-size:4.8px"><s class="o"></s>SRC</p>
<p class="d1"><s></s>.vscode</p><p class="d1"><s></s>my_robot_bringup</p><p class="d1"><s class="o"></s>my_robot_description</p><p class="d2"><s class="o"></s>launch</p><p class="f2"><q class="py"></q>display.launch.py</p><p class="f2"><q></q>display.launch.xml</p><p class="d2"><s></s>rviz</p><p class="d2"><s class="o"></s>urdf</p>
<p class="f2 sl"><q></q>arm.xacro</p><p class="f2"><q></q>camera.xacro</p><p class="f2"><q></q>common_properties.xacro</p><p class="f2"><q></q>mobile_base_gazebo.xacro</p><p class="f2"><q></q>mobile_base.xacro</p><p class="f2"><q></q>my_robot.urdf.xacro</p><p class="f2"><q></q>standalone_arm.urdf.xacro</p><p class="f1"><q class="M">M</q>CMakeLists.txt</p><p class="f1"><q></q>package.xml</p></div>
<div class="x" style="left:50px;top:316px;color:#bbb;font-weight:bold;font-size:4.6px">› OUTLINE</div><div class="x" style="left:50px;top:324px;color:#bbb;font-weight:bold;font-size:4.6px">› TIMELINE</div><div style="left:42px;top:311px;width:93px;height:.5px;background:#444"></div><div style="left:42px;top:320px;width:93px;height:.5px;background:#444"></div>
<div class="tab0" style="left:135px;width:42px"></div><div class="x" style="left:147px;top:38.5px;color:#ddd;font-size:5.4px">arm.xacro</div><div class="ic" style="left:141px"></div><div class="x" style="left:141px;top:49.5px;color:#888;font-size:5px">my_robot_desc</div>
<pre class="ln" style="left:135px;top:57.5px">17
18
19
20
21
22
23
24
25
26
27
28
29
30
31
32
33
<span style="color:#c6c6c6">34</span>
35
36
37
38</pre>
<pre class="cd" style="left:167px;top:253.5px">&lt;/</pre>
<div class="T">
<div style="left:0;top:0;width:526px;height:11px;background:#f0f0f0"></div><div class="x" style="left:0;width:518px;text-align:center;top:5.5px;color:#333;font-weight:bold;font-size:6.2px">ed@pc: ~</div>
<div class="Tb" style="left:0;top:11px;width:258px;background:#b3161b;color:#eee">ed@pc: ~ 67x15</div>
<div class="Tb" style="left:261px;top:11px;width:265px;color:#444">ed@pc: ~ 67x15</div>
<div class="Tb" style="left:0;top:143px;width:258px">ed@pc: ~ 67x15</div>
<div class="Tb" style="left:261px;top:143px;width:265px">ed@pc: ~ 67x15</div>
<div style="left:258px;top:11px;width:3px;height:263px;background:#d0d0d0"></div><div style="left:0;top:141px;width:526px;height:2px;background:#d0d0d0"></div>
<pre class="Tp" style="left:0;top:19.7px"><b>ed@pc</b>:~$ ros2 launch my_robot_description display.launch.xml
[INFO] [launch]: All log files can be found below /home/ed/.ros/log
/2023-06-30-10-11-00-942118-pc-28922
[INFO] [launch]: Default logging verbosity is set to INFO
[INFO] [robot_state_publisher-1]: process started with pid [28942]
[INFO] [joint_state_publisher_gui-2]: process started with pid [289
44]
[INFO] [rviz2-3]: process started with pid [28946]
[rviz2-3] Warning: Ignoring XDG_SESSION_TYPE=wayland on Gnome. Use
QT_QPA_PLATFORM=wayland to run on Wayland anyway.
[robot_state_publisher-1] [INFO] [1688112661.244811407] [robot_stat
e_publisher]: got segment arm_base_link
[robot_state_publisher-1] [INFO] [1688112661.244895753] [robot_stat
e_publisher]: got segment forearm_link</pre>
<div style="left:0;top:133px;width:3.5px;height:8px;background:#fff"></div>
<pre class="Tp" style="left:261px;top:19.7px"><b>ed@pc</b>:~$ </pre><div style="left:294px;top:20px;width:3.5px;height:7px;border:.5px solid #777"></div>
<pre class="Tp" style="left:0;top:151.7px"><b>ed@pc</b>:~$ </pre><div style="left:33px;top:152px;width:3.5px;height:7px;border:.5px solid #777"></div>
<pre class="Tp" style="left:261px;top:151.7px"><b>ed@pc</b>:~$ </pre><div style="left:294px;top:152px;width:3.5px;height:7px;border:.5px solid #777"></div>
<div style="left:255px;top:125px;width:2px;height:14px;background:#777"></div>
</div>
<div class="st"><div class="x" style="left:7px">✕ ROS2.humble</div><div class="x" style="left:48px">⊗0 ⚠0</div><div class="x" style="left:449px">Ln 34, Col 23</div><div class="x" style="left:483px">Spaces:4</div><div class="x" style="left:509px">UTF-8</div><div class="x" style="left:528px">LF</div><div class="x" style="left:539px">XML</div><div class="x" style="left:553px;top:3px;color:#9fc0d8">Udemy</div></div>
</div>

<!-- CELL 8 -->
<div class="cell" style="left:600px;top:674px">
<div class="tt"><div class="x" style="left:6px;top:5px">Activities</div><div class="x" style="left:41px;top:5px">⧉ Visual Studio Code</div><div style="left:551px;top:2px;width:5px;height:5px;background:#c9651f"></div><div style="left:560px;top:3px;width:5px;height:4px;background:#eee"></div><div style="left:570px;top:3px;width:4px;height:4px;background:#ccc"></div><div style="left:579px;top:2px;width:3px;height:6px;background:#ccc"></div><div style="left:589px;top:3px;width:5px;height:5px;background:#6da86d"></div></div>
<svg class="dk"><use href="#dock1" width="23" height="337"/></svg>
<div style="left:3px;top:124px;width:18px;height:19px;background:rgba(255,255,255,.14);border-radius:3px"></div>
<div class="tb"></div><div class="ttl x">● arm.xacro - src - Visual Studio Code</div>
<div class="mb"></div><div class="m x" style="left:26px">File</div><div class="m x" style="left:40px">Edit</div><div class="m x" style="left:55px">Selection</div><div class="m x" style="left:85px">View</div><div class="m x" style="left:103px">Go</div><div class="m x" style="left:115px">Run</div><div class="m x" style="left:130px">Terminal</div><div class="m x" style="left:159px">Help</div>
<div class="ab"></div><svg style="left:23px;top:32px;width:19px;height:296px"><use href="#act" width="19" height="296"/></svg><div style="left:34.5px;top:42.5px;width:4px;height:4px;border-radius:50%;background:#0a74bd"></div>
<div class="sd"></div><div class="x tx" style="left:50px">EXPLORER</div>
<div class="tr"><p class="d0" style="margin-top:-9px;font-weight:bold;font-size:4.8px"><s class="o"></s>SRC</p>
<p class="d1"><s></s>.vscode</p><p class="d1"><s></s>my_robot_bringup</p><p class="d1"><s class="o"></s>my_robot_description</p><p class="d2"><s class="o"></s>launch</p><p class="f2"><q class="py"></q>display.launch.py</p><p class="f2"><q></q>display.launch.xml</p><p class="d2"><s></s>rviz</p><p class="d2"><s class="o"></s>urdf</p>
<p class="f2 sl"><q></q>arm.xacro</p><p class="f2"><q></q>camera.xacro</p><p class="f2"><q></q>common_properties.xacro</p><p class="f2"><q></q>mobile_base_gazebo.xacro</p><p class="f2"><q></q>mobile_base.xacro</p><p class="f2"><q></q>my_robot.urdf.xacro</p><p class="f2"><q></q>standalone_arm.urdf.xacro</p><p class="f1"><q class="M">M</q>CMakeLists.txt</p><p class="f1"><q></q>package.xml</p></div>
<div class="x" style="left:50px;top:316px;color:#bbb;font-weight:bold;font-size:4.6px">› OUTLINE</div><div class="x" style="left:50px;top:324px;color:#bbb;font-weight:bold;font-size:4.6px">› TIMELINE</div><div style="left:42px;top:311px;width:93px;height:.5px;background:#444"></div><div style="left:42px;top:320px;width:93px;height:.5px;background:#444"></div>
<div class="ed"><div style="left:32px;top:76px;width:433px;height:9.3px;border:.5px solid #2e2e2e;box-sizing:border-box"></div><div class="gd" style="top:12px;height:262px"></div><div class="gd" style="left:49px;top:85px;height:60px"></div><div class="gd" style="left:49px;top:179px;height:60px"></div><div class="gd" style="left:66px;top:95px;height:20px"></div><div class="gd" style="left:66px;top:188px;height:20px"></div>
<pre class="ln" style="top:1.4px">1
2
3
4
5
6
7
8
<span style="color:#c6c6c6">9</span>
10
11
12
13
14
15
16
17
18
19
20
21
22
23
24
25
26
27
28
29
30</pre>
<pre class="cd" style="top:1.4px">&lt;?<i>xml</i> <b>version</b>=<u>"1.0"</u>?&gt;
&lt;<i>robot</i> <b>xmlns:xacro</b>=<u style="text-decoration:underline">"http://www.ros.org/wiki/xacro"</u>&gt;

    &lt;<i>xacro:property</i> <b>name</b>=<u>"arm_base_length"</u> <b>value</b>=<u>"0.1"</u> /&gt;
    &lt;<i>xacro:property</i> <b>name</b>=<u>"arm_base_width"</u> <b>value</b>=<u>"0.1"</u> /&gt;
    &lt;<i>xacro:property</i> <b>name</b>=<u>"arm_base_height"</u> <b>value</b>=<u>"0.02"</u> /&gt;
    &lt;<i>xacro:property</i> <b>name</b>=<u>"forearm_radius"</u> <b>value</b>=<u>"0.02"</u> /&gt;
    &lt;<i>xacro:property</i> <b>name</b>=<u>"forearm_length"</u> <b>value</b>=<u>"0.3"</u> /&gt;
    <span style="color:#c04a3a">&lt;</span><i>xacro:property</i> <b>name</b>=<u>"hand_radius"</u> <b>value</b>

    &lt;<i>link</i> <b>name</b>=<u>"arm_base_link"</u>&gt;
        &lt;<i>visual</i>&gt;
            &lt;<i>geometry</i>&gt;
                &lt;<i>box</i> <b>size</b>=<u>"${arm_base_length} ${arm_base_width} ${arm_base_height}"</u> /&gt;
            &lt;/<i>geometry</i>&gt;
            &lt;<i>origin</i> <b>xyz</b>=<u>"0 0 ${arm_base_height / 2.0}"</u> <b>rpy</b>=<u>"0 0 0"</u> /&gt;
            &lt;<i>material</i> <b>name</b>=<u>"orange"</u> /&gt;
        &lt;/<i>visual</i>&gt;
    &lt;/<i>link</i>&gt;

    &lt;<i>link</i> <b>name</b>=<u>"forearm_link"</u>&gt;
        &lt;<i>visual</i>&gt;
            &lt;<i>geometry</i>&gt;
                &lt;<i>cylinder</i> <b>radius</b>=<u>"${forearm_radius}"</u> <b>length</b>=<u>"${forearm_length}"</u> /&gt;
            &lt;/<i>geometry</i>&gt;
            &lt;<i>origin</i> <b>xyz</b>=<u>"0 0 ${forearm_length / 2.0}"</u> <b>rpy</b>=<u>"0 0 0"</u> /&gt;
            &lt;<i>material</i> <b>name</b>=<u>"yellow"</u> /&gt;
        &lt;/<i>visual</i>&gt;
    &lt;/<i>link</i>&gt;
</pre>
<div style="left:219px;top:85px;width:168px;height:11px;background:#07324f"></div><div class="x" style="left:219px;top:90.5px;font:7px/0 'Liberation Sans',sans-serif;color:#2f9fe8;padding-left:2px"><span style="font-size:4px;color:#aaa">▭</span> value</div>
</div>
<div class="tab0" style="width:298px;left:182px"></div><div class="tab1"></div><div style="left:135px;top:45px;width:465px;height:9px;background:#1e1e1e"></div>
<div class="x" style="left:147px;top:38.5px;color:#ddd;font-size:5.4px">arm.xacro</div><div class="x" style="left:174px;top:38.5px;color:#ccc">●</div><div class="ic" style="left:141px"></div>
<div class="x tx" style="left:194px">display.launch.xml</div><div class="ic" style="left:188px"></div><div class="x tx" style="left:260px">mobile_base.xacro</div><div class="ic" style="left:254px"></div><div class="x tx" style="left:325px">common_properties.xacro</div><div class="ic" style="left:319px"></div><div class="x tx" style="left:409px">standalone_arm.urdf.xacro</div><div class="ic" style="left:403px"></div>
<div class="x" style="left:141px;top:49.5px;color:#888;font-size:5px">my_robot_description › urdf › arm.xacro</div>
<div class="sb" style="top:54px;height:105px"></div><div style="left:578px;top:36px;width:5px;height:5px;border:.5px solid #999"></div><div class="x" style="left:590px;top:38px;color:#aaa">···</div>
<div class="st"><div class="x" style="left:7px">✕ ROS2.humble</div><div class="x" style="left:48px">⊗0 ⚠0</div><div class="x" style="left:452px">Ln 9, Col 45</div><div class="x" style="left:483px">Spaces:4</div><div class="x" style="left:509px">UTF-8</div><div class="x" style="left:528px">LF</div><div class="x" style="left:539px">XML</div><div class="x" style="left:553px;top:3px;color:#9fc0d8">Udemy</div></div>
</div>

<!-- CELL 9 -->
<div class="cell dim" style="left:1200px;top:674px">
<div class="tt"><div class="x" style="left:6px;top:5px">Activities</div><div class="x" style="left:41px;top:5px">⇆ rviz2</div><div style="left:551px;top:2px;width:5px;height:5px;background:#c9651f"></div><div style="left:560px;top:3px;width:5px;height:4px;background:#eee"></div><div style="left:570px;top:3px;width:4px;height:4px;background:#ccc"></div><div style="left:579px;top:2px;width:3px;height:6px;background:#ccc"></div><div style="left:589px;top:3px;width:5px;height:5px;background:#6da86d"></div></div>
<svg class="dk"><use href="#dock2" width="23" height="337"/></svg>
<div class="tb"></div><div class="ttl x">arm.xacro - src - Visual Studio Code</div>
<div class="mb"></div><div class="m x" style="left:148px">nal</div><div class="m x" style="left:159px">Help</div>
<div class="ab"></div><svg style="left:23px;top:32px;width:19px;height:296px"><use href="#act" width="19" height="296"/></svg>
<div class="sd"></div>
<div class="tr"><p class="d0" style="margin-top:-9px;font-weight:bold;font-size:4.8px"><s class="o"></s>SRC</p>
<p class="d1"><s></s>.vscode</p><p class="d1"><s></s>my_robot_bringup</p><p class="d1"><s class="o"></s>my_robot_description</p><p class="d2"><s class="o"></s>launch</p><p class="f2"><q class="py"></q>display.launch.py</p><p class="f2"><q></q>display.launch.xml</p><p class="d2"><s></s>rviz</p><p class="d2"><s class="o"></s>urdf</p>
<p class="f2 sl"><q></q>arm.xacro</p><p class="f2"><q></q>camera.xacro</p><p class="f2"><q></q>common_properties.xacro</p><p class="f2"><q></q>mobile_base_gazebo.xacro</p><p class="f2"><q></q>mobile_base.xacro</p><p class="f2"><q></q>my_robot.urdf.xacro</p><p class="f2"><q></q>standalone_arm.urdf.xacro</p><p class="f1"><q class="M">M</q>CMakeLists.txt</p><p class="f1"><q></q>package.xml</p></div>
<div class="x" style="left:50px;top:316px;color:#bbb;font-weight:bold;font-size:4.6px">› OUTLINE</div><div class="x" style="left:50px;top:324px;color:#bbb;font-weight:bold;font-size:4.6px">› TIMELINE</div><div style="left:42px;top:311px;width:93px;height:.5px;background:#444"></div><div style="left:42px;top:320px;width:93px;height:.5px;background:#444"></div>
<div class="x" style="left:147px;top:38.5px;color:#ddd;font-size:5.4px">arm.xacro</div><div class="x" style="left:146px;top:49.5px;color:#888;font-size:5px">my_robot_d</div>
<pre class="ln" style="left:135px;top:59px">37
38
39
40
41
42
43
44
45
46
47
48
49
50
51
<span style="color:#c6c6c6">52</span>
53
54
55
56
57
58</pre>
<div class="T"><div class="Tb" style="left:0;top:11px;width:262px">ed@pc: ~ 67x15</div><div class="Tb" style="left:263px;top:11px;width:263px">ed@pc: ~ 67x15</div><div class="Tb" style="left:263px;top:143px;width:263px">ed@pc: ~ 67x15</div><div style="left:0;top:0;width:526px;height:11px;background:#f0f0f0"></div><div style="left:256px;top:264px;width:5px;height:10px;background:#ccc"></div></div>
<div class="J" style="left:35px;top:23px;width:110px;height:111px"><div class="x" style="left:0;width:96px;text-align:center;top:5px;font-size:6.2px;font-weight:bold;color:#444">Joint State Publisher</div><div class="x" style="left:92px;top:5px;color:#888">– ✕</div>
<div class="Jb" style="left:3px;top:15px;width:104px;height:9px;line-height:8.5px;font-weight:bold">Randomize</div><div class="Jb" style="left:3px;top:26px;width:104px;height:10px;line-height:9.5px">Center</div>
<div style="left:3px;top:38px;width:104px;height:69px;border:.5px solid #ccc;box-sizing:border-box"></div>
<div class="x" style="left:11px;top:50px;font-size:4.8px;color:#444">arm_base_forearm_joint</div><div style="left:68px;top:46px;width:10px;height:7px;background:#fff;font-size:4.6px;line-height:7px;text-align:center">0.00</div><div style="left:11px;top:58.5px;width:62px;height:1.5px;background:#ccc"></div><div style="left:11px;top:57px;width:4px;height:4px;background:#f5f5f5;border:.5px solid #ccc"></div>
<div class="x" style="left:11px;top:76px;font-size:4.8px;color:#444">forearm_hand_joint</div><div style="left:62px;top:72px;width:11px;height:7px;background:#fff;font-size:4.6px;line-height:7px;text-align:center">0.00</div><div style="left:11px;top:85px;width:62px;height:1.5px;background:#ccc"></div><div style="left:11px;top:83.5px;width:4px;height:4px;background:#f5f5f5;border:.5px solid #ccc"></div></div>
<div class="R">
<div class="y" style="left:0;width:374px;text-align:center;top:6.5px;font-weight:bold;font-size:6.3px;color:#333">/home/ed/ros2_ws/install/my_robot_description/share/my_robot_description/rviz/urdf_config.rviz* - RViz</div>
<div class="y" style="left:3px;top:17px;font-size:6.2px">File</div><div class="y" style="left:17px;top:17px;font-size:6.2px">Panels</div><div class="y" style="left:39px;top:17px;font-size:6.2px">Help</div>
<div style="left:0;top:22.5px;width:36px;height:13px;background:#ddd"></div>
<div class="y" style="left:3px;top:27.5px;font-size:5.3px;color:#444">⌖ Interact</div><div class="y" style="left:38px;top:27.5px;font-size:5.3px;color:#444">⌖Move Camera</div><div class="y" style="left:82px;top:27.5px;font-size:5.3px;color:#444">▭ Select</div><div class="y" style="left:110px;top:27.5px;font-size:5.3px;color:#444">✛ Focus Camera</div><div class="y" style="left:155px;top:27.5px;font-size:5.3px;color:#444">⟷ Measure</div><div class="y" style="left:189px;top:27.5px;font-size:5.3px;color:#444"><span style="color:#4a4">↗</span> 2D Pose Estimate</div><div class="y" style="left:240px;top:27.5px;font-size:5.3px;color:#444"><span style="color:#4a4">↗</span> 3D Goal Pose</div><div class="y" style="left:285px;top:27.5px;font-size:5.3px;color:#444"><span style="color:#c33">♦</span> Publish Point</div><div class="y" style="left:330px;top:27.5px;font-size:7px;color:#5577bb">+</div><div class="y" style="left:347px;top:27.5px;font-size:7px;color:#555">−</div>
<div style="left:0;top:35px;width:110px;height:8px;background:#bdbdbd"></div><div class="y" style="left:3px;top:39px;font-size:6.1px">◫ Displays</div><div style="left:104.5px;top:36.5px;width:5px;height:5px;background:#c44"></div>
<div class="rl" style="top:43px;height:161px"><div style="left:54px;top:0;width:.5px;height:161px;background:#e5e5e5"></div><div style="left:104.5px;top:0;width:5px;height:161px;background:#ececec"></div><div style="left:104.5px;top:3px;width:5px;height:28px;background:#c8c8c8"></div>
<p style="padding-left:16.5px">Frame Rate<em>30</em></p>
<p style="padding-left:15px">✓ Global Statu...</p>
<p style="padding-left:22px">Fixed Fra...<em>OK</em></p>
<p style="padding-left:15px" class="bl">Grid<span class="k">✓</span></p>
<p style="padding-left:15px" class="bl">RobotModel<span class="k">✓</span></p>
<p style="padding-left:22px">Status: Ok</p>
<p style="padding-left:16.5px">Visual Enabl...<span class="k">✓</span></p>
<p style="padding-left:16.5px">Collision En...<span class="k"></span></p>
<p style="padding-left:16.5px">Mass Prope...</p>
<p style="padding-left:16.5px">Update Inte...<em>0</em></p>
<p style="padding-left:16.5px">Alpha<em>1</em></p>
<p style="padding-left:16.5px">Description ...<em>Topic</em></p>
<p style="padding-left:16.5px">Description ...<em>/robot_description</em></p>
<p style="padding-left:16.5px">TF Prefix</p>
<p style="padding-left:16.5px">Links</p>
<p style="padding-left:24px">Link Tree...<em>Links in Alphabeti...</em></p>
<p style="padding-left:24px">Expand L...<span class="k"></span></p>
<p style="padding-left:24px">All Links ...<span class="k"></span></p>
<p style="padding-left:24px">✓ arm_b...<span class="k">✓</span></p>
<p style="padding-left:24px">✓ forear...<span class="k">✓</span></p>
<p style="padding-left:24px">✓ hand_...<span class="k"></span></p>
<p style="padding-left:15px" class="bl">TF<span class="k">✓</span></p></div>
<div style="left:0;top:206px;width:110px;height:27px;background:#fff;font-size:5.8px;line-height:7px;color:#333;padding:1px;box-sizing:border-box;white-space:normal"><span style="font-weight:bold">Fixed Frame</span><br>Frame into which all data is transformed before being displayed.</div>
<div class="rb" style="left:1px;top:233.5px;width:24px;line-height:9px">Add</div><div class="rb off" style="left:27px;top:233.5px;width:27.5px">Duplicate</div><div class="rb off" style="left:57px;top:233.5px;width:25px">Remove</div><div class="rb off" style="left:84px;top:233.5px;width:25px">Rename</div>
<div style="left:120px;top:38px;width:246.5px;height:202.5px;background:#303030"></div>
<div class="y" style="left:114px;top:139px;color:#666;font-size:5px">◂</div><div class="y" style="left:370px;top:139px;color:#666;font-size:5px">▸</div>
<div style="left:0;top:246px;width:374px;height:7.5px;background:#bdbdbd"></div><div class="y" style="left:2px;top:250px;font-size:6.1px">◫ Time</div><div style="left:369px;top:247px;width:4px;height:5px;background:#c44"></div>
<div class="y" style="left:3px;top:260px;font-size:5.7px">ROS Time:</div><div class="fd" style="left:31.6px;top:256px;width:40.4px">1688113079.69</div><div class="y" style="left:74px;top:260px;font-size:5.7px">ROS Elapsed:</div><div class="fd" style="left:110px;top:256px;width:46px">78.62</div><div class="y" style="left:159px;top:260px;font-size:5.7px">Wall Time:</div><div class="fd" style="left:188px;top:256px;width:46px">1688113079.72</div><div class="y" style="left:236px;top:260px;font-size:5.7px">Wall Elapsed:</div><div class="fd" style="left:272px;top:256px;width:47px">78.62</div><div style="left:328px;top:257.5px;width:5px;height:5px;background:#fafafa"></div><div class="y" style="left:334.5px;top:260px;font-size:5.7px">Experimental</div>
<div class="rb" style="left:1.5px;top:266.5px;width:16.5px;height:8px;font-weight:bold;font-size:5px;line-height:8px">Reset</div><div class="y" style="left:351px;top:270.5px;font-size:5.7px">31 fps</div>
</div>
<svg style="left:291px;top:53.5px;width:246.5px;height:202.5px" viewBox="291 53.5 246.5 202.5"><g stroke="#5c5c5c" stroke-width=".5" fill="none"><path d="M291 170 537 170M291 173 537 172M291 176 537 176M291 180 537 178M291 184 537 182M291 190 400 175M450 190 537 203M400 178 537 182M291 218 345 241M425 224 537 183"/></g>
<path d="M385 233 428 218.5 430 225 386 240Z" fill="#16a016"/><path d="M386 235 429 221" stroke="#0b5a0b" stroke-width="1.2"/>
<path d="M345 241 367 233 392 243 377 249Z" fill="#0a0a0a"/><path d="M345 241 377 249 392 243 392 252 377 256 345 251Z" fill="#c9701c"/>
<path d="M381 238 462 254 462 256.5 400 256.5 392 246Z" fill="#a81010"/><path d="M381 238 445 251" stroke="#d01a1a" stroke-width="2"/>
<rect x="369" y="105" width="16.5" height="136" fill="#f0f000"/><rect x="381" y="105" width="4.5" height="136" fill="#b4b400"/><ellipse cx="377" cy="105.5" rx="8" ry="1.5" fill="#f8f830"/><ellipse cx="377" cy="241" rx="8" ry="2" fill="#f0f000"/></svg>
<div class="st"><div class="x" style="left:7px">✕ ROS2.humble</div><div class="x" style="left:48px">⊗0 ⚠0</div><div class="x" style="left:449px">Ln 52, Col 35</div><div class="x" style="left:483px">Spaces:4</div><div class="x" style="left:509px">UTF-8</div><div class="x" style="left:528px">LF</div><div class="x" style="left:539px">XML</div><div class="x" style="left:553px;top:3px;color:#9fc0d8">Udemy</div></div>
</div>

</div></body></html>
